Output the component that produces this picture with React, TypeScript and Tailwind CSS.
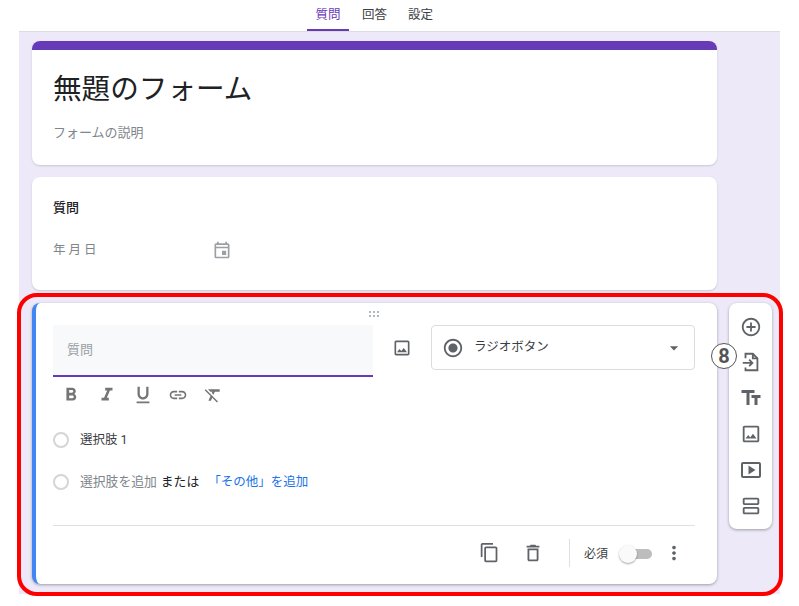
import {
  MdAddCircleOutline,
  MdArrowDropDown,
  MdContentCopy,
  MdFormatBold,
  MdFormatClear,
  MdFormatItalic,
  MdFormatUnderlined,
  MdLink,
  MdMoreVert,
  MdOutlineDelete,
  MdOutlineEvent,
  MdOutlineImage,
  MdOutlineSmartDisplay,
  MdOutlineViewAgenda,
  MdRadioButtonChecked,
  MdTextFields,
} from 'react-icons/md';

function ImportIcon() {
  return (
    <svg viewBox="0 0 24 24" className="h-[22px] w-[22px]" fill="none" stroke="currentColor" strokeWidth="2">
      <path d="M6 8V3h8l5 5v13H6v-3" />
      <path d="M14 3v5h5" />
      <path d="M3 13h10M10 9.5l3.5 3.5-3.5 3.5" />
    </svg>
  );
}

function Radio() {
  return <span className="h-4 w-4 shrink-0 rounded-full border-2 border-[#d5d5d5]" />;
}

export default function App() {
  const card = 'w-[685px] rounded-lg bg-white shadow-[0_1px_2px_rgba(60,64,67,0.2)]';

  return (
    <div className="relative h-[606px] w-[799px] overflow-hidden bg-white font-['Roboto','Noto_Sans_CJK_JP',sans-serif] text-[#3c4043]">
      <nav className="ml-[19px] flex h-[32px] w-[761px] border-b border-[#dadce0] pl-[288px] text-[12.5px]">
        <div className="flex w-[42px] flex-col items-center justify-between pt-[6px] text-[#673ab7]">
          <span>質問</span>
          <span className="h-[2px] w-full bg-[#673ab7]" />
        </div>
        <span className="ml-[13px] pt-[6px]">回答</span>
        <span className="ml-[21px] pt-[6px]">設定</span>
      </nav>

      <main className="ml-[19px] flex h-[562px] w-[761px] flex-col gap-[12px] bg-[#ede9f8] pl-[13px] pt-[9px]">
        <section className={`${card} h-[124px] overflow-hidden`}>
          <div className="h-[9px] bg-[#673ab7]" />
          <div className="px-[21px] pt-[19px]">
            <h1 className="text-[28.6px] leading-[40px] text-[#202124]">無題のフォーム</h1>
            <p className="mt-[15px] text-[13px] leading-[18px] text-[#80868b]">フォームの説明</p>
          </div>
        </section>

        <section className={`${card} h-[113px] px-[21px] pt-[22px]`}>
          <h2 className="text-[13px] font-medium leading-[18px] text-[#202124]">質問</h2>
          <div className="mt-[23px] flex items-center">
            <span className="w-[159px] text-[12.5px] tracking-[3px] text-[#80868b]">年月日</span>
            <MdOutlineEvent className="h-[20px] w-[20px] text-[#9aa0a6]" />
          </div>
        </section>

        <div className="mt-[1px] flex items-start gap-[12px]">
          <section className={`${card} relative h-[281px] overflow-hidden border-l-4 border-[#4285f4] pl-[17px] pr-[22px] shadow-[0_1px_3px_rgba(60,64,67,0.45)]`}>
            <div className="absolute left-[333px] top-[8px] grid grid-cols-3 gap-[2px]">
              {[0, 1, 2, 3, 4, 5].map((i) => (
                <span key={i} className="h-[2px] w-[2px] rounded-full bg-[#9aa0a6]" />
              ))}
            </div>

            <div className="flex pt-[22px]">
              <div className="flex h-[52px] w-[320px] items-center border-b-2 border-[#673ab7] bg-[#f8f9fa] pl-[14px] text-[13px] text-[#9aa0a6]">
                質問
              </div>
              <div className="flex h-[45px] w-[58px] items-center justify-center">
                <MdOutlineImage className="h-[20px] w-[20px] text-[#5f6368]" />
              </div>
              <div className="flex h-[45px] w-[264px] items-center rounded border border-[#dadce0] pl-[10px] pr-[10px] text-[12.5px]">
                <MdRadioButtonChecked className="h-[22px] w-[22px] text-[#5f6368]" />
                <span className="ml-[10px] flex-1">ラジオボタン</span>
                <MdArrowDropDown className="h-[20px] w-[20px] text-[#5f6368]" />
              </div>
            </div>

            <div className="mt-[7px] flex items-center gap-[14px] pl-[7px] text-[#757575]">
              <MdFormatBold className="h-[22px] w-[22px]" />
              <MdFormatItalic className="h-[22px] w-[22px]" />
              <MdFormatUnderlined className="h-[22px] w-[22px]" />
              <MdLink className="h-[20px] w-[20px]" />
              <MdFormatClear className="ml-[1px] h-[20px] w-[20px]" />
            </div>

            <div className="mt-[25px] flex items-center gap-[11px] text-[12.5px] leading-[18px]">
              <Radio />
              <span>選択肢 1</span>
            </div>

            <div className="mt-[24px] flex items-center gap-[11px] leading-[18px]">
              <Radio />
              <span className="text-[12.8px] text-[#80868b]">選択肢を追加</span>
              <span className="-ml-[7px] text-[12.8px] text-[#202124]">または</span>
              <span className="-ml-[2px] text-[12.5px] text-[#1a73e8]">「その他」を追加</span>
            </div>

            <div className="mt-[34px] flex h-[54px] items-center justify-end border-t border-[#e0e0e0] pr-[10px]">
              <MdContentCopy className="h-[21px] w-[21px] text-[#5f6368]" />
              <MdOutlineDelete className="ml-[22px] h-[22px] w-[22px] text-[#5f6368]" />
              <span className="ml-[25px] h-[28px] w-px bg-[#e0e0e0]" />
              <span className="ml-[14px] mt-[3px] text-[12px] text-[#3c4043]">必須</span>
              <span className="relative ml-[10px] mt-[3px] flex h-[18px] w-[34px] items-center">
                <span className="ml-[3px] h-[10px] w-[31px] rounded-full bg-[#bdbdbd]" />
                <span className="absolute left-[1px] h-[18px] w-[18px] rounded-full bg-[#fafafa] shadow-[0_1px_2px_rgba(0,0,0,0.35)]" />
              </span>
              <MdMoreVert className="ml-[11px] h-[22px] w-[22px] text-[#5f6368]" />
            </div>
          </section>

          <aside className="flex h-[226px] w-[43px] flex-col items-center justify-between rounded-lg bg-white pb-[12px] pt-[13px] text-[#5f6368] shadow-[0_1px_3px_rgba(60,64,67,0.45)]">
            <MdAddCircleOutline className="h-[22px] w-[22px]" />
            <ImportIcon />
            <MdTextFields className="h-[24px] w-[24px]" />
            <MdOutlineImage className="h-[22px] w-[22px]" />
            <MdOutlineSmartDisplay className="h-[24px] w-[24px]" />
            <MdOutlineViewAgenda className="h-[22px] w-[22px]" />
          </aside>
        </div>
      </main>

      <span className="absolute left-[711px] top-[343px] flex h-[26px] w-[26px] items-center justify-center rounded-full border border-[#555] bg-white text-[20px] font-bold leading-none text-[#555]">
        8
      </span>
      <div className="pointer-events-none absolute left-[17px] top-[293px] h-[303px] w-[766px] rounded-[20px] border-4 border-[#ff0000]" />
    </div>
  );
}
